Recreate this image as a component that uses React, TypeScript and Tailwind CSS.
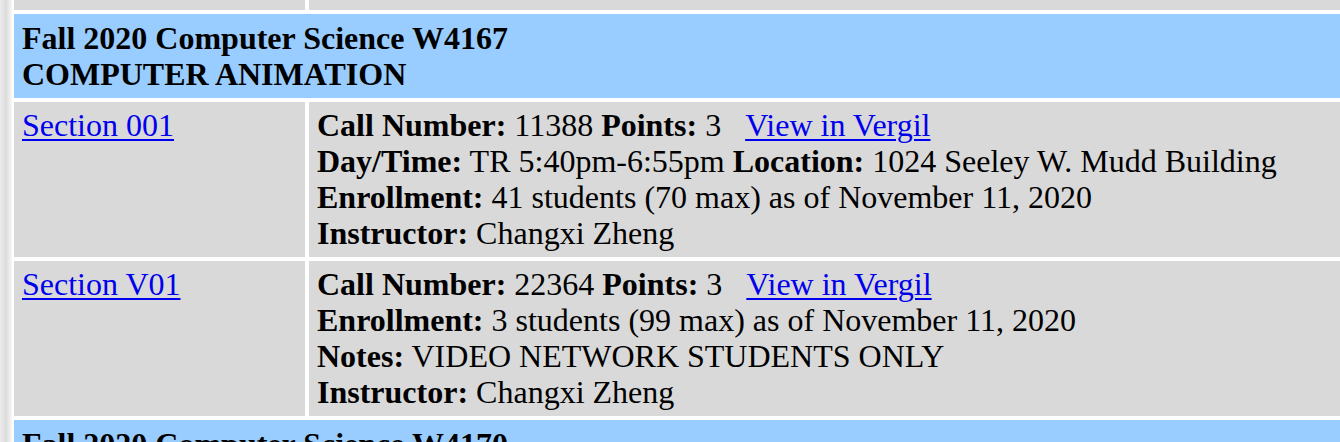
import { FC, ReactNode } from 'react';

interface ISection {
  name: string;
  lines: ReactNode[];
}

const B: FC<{ children: ReactNode }> = ({ children }) => <b className="font-bold">{children}</b>;

const Vergil = () => (
  <a href="#" className="ml-[24px] text-[#0000ee] underline underline-offset-[3px] decoration-[1.5px]">
    View in Vergil
  </a>
);

const sections: ISection[] = [
  {
    name: 'Section 001',
    lines: [
      <>
        <B>Call Number:</B> 11388 <B>Points:</B> 3<Vergil />
      </>,
      <>
        <B>Day/Time:</B> TR 5:40pm-6:55pm <B>Location:</B> 1024 Seeley W. Mudd Building
      </>,
      <>
        <B>Enrollment:</B> 41 students (70 max) as of November 11, 2020
      </>,
      <>
        <B>Instructor:</B> Changxi Zheng
      </>,
    ],
  },
  {
    name: 'Section V01',
    lines: [
      <>
        <B>Call Number:</B> 22364 <B>Points:</B> 3<Vergil />
      </>,
      <>
        <B>Enrollment:</B> 3 students (99 max) as of November 11, 2020
      </>,
      <>
        <B>Notes:</B> VIDEO NETWORK STUDENTS ONLY
      </>,
      <>
        <B>Instructor:</B> Changxi Zheng
      </>,
    ],
  },
];

const CourseHeader: FC<{ title: string; subtitle?: string }> = ({ title, subtitle }) => (
  <div className="col-span-2 bg-[#99ccff] px-[8px] py-[6px] font-bold leading-[36px] whitespace-nowrap">
    <div>{title}</div>
    {subtitle && <div>{subtitle}</div>}
  </div>
);

export default function App() {
  return (
    <div
      className="flex h-[442px] w-[1340px] overflow-hidden bg-white text-[32px] text-black"
      style={{ fontFamily: '"Liberation Serif", "Times New Roman", serif' }}
    >
      <div className="w-[12px] shrink-0 bg-gradient-to-r from-[#ececec] via-[#dcdcdc] to-[#f8f8f8]" />
      <div className="mt-[-145px] ml-[2px] grid flex-1 grid-cols-[291px_1fr] content-start gap-[4px]">
        <div className="h-[155px] bg-[#d9d9d9]" />
        <div className="h-[155px] bg-[#d9d9d9]" />

        <CourseHeader title="Fall 2020 Computer Science W4167" subtitle="COMPUTER ANIMATION" />

        {sections.map((s) => (
          <div key={s.name} className="contents">
            <div className="bg-[#d9d9d9] px-[8px] pt-[5px] pb-[6px] leading-[36px]">
              <a href="#" className="text-[#0000ee] underline underline-offset-[3px] decoration-[1.5px]">
                {s.name}
              </a>
            </div>
            <div className="bg-[#d9d9d9] px-[8px] pt-[5px] pb-[6px] leading-[36px] whitespace-nowrap">
              {s.lines.map((l, i) => (
                <div key={i}>{l}</div>
              ))}
            </div>
          </div>
        ))}

        <CourseHeader title="Fall 2020 Computer Science W4170" />
      </div>
    </div>
  );
}
